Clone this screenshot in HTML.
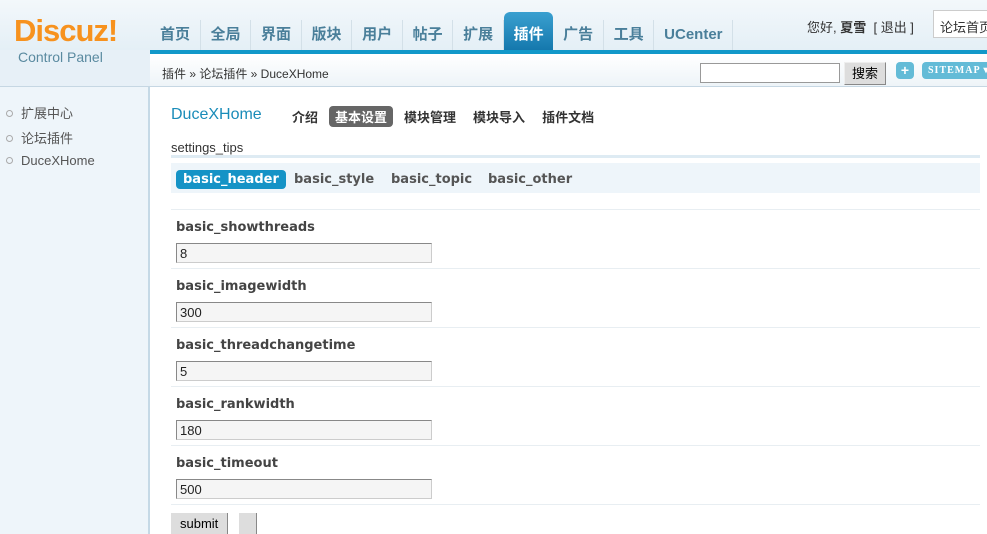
<!DOCTYPE html>
<html><head><meta charset="utf-8"><style>
*{margin:0;padding:0;box-sizing:border-box}
body{width:987px;height:534px;overflow:hidden;background:#fff;font-family:"Liberation Sans","Noto Sans CJK SC",sans-serif;font-size:12px;color:#333;position:relative}
.top{position:absolute;left:0;top:0;width:987px;height:50px;background:linear-gradient(#f3f8fb,#e4eff6)}
.side{position:absolute;left:0;top:50px;width:150px;height:484px;background:#eef5fa;border-right:2px solid #c5d9e6}
.logohead{position:absolute;left:0;top:50px;width:150px;height:37px;background:#e7f0f7;border-bottom:1px solid #c6d7e3}
.logo{position:absolute;left:14px;top:13px;font:bold 31px "Liberation Sans",sans-serif;color:#f7921e;letter-spacing:-1px}
.cp{position:absolute;left:18px;top:49px;font-size:14px;color:#5a8aa0}
.nav{position:absolute;left:150px;top:20px;height:30px;display:flex}
.nav span{font-size:15px;font-weight:bold;color:#4a7f9a;padding:5px 9.5px 0 10px;height:30px;border-right:1px solid #d3e0e8;line-height:20px}
.nav span.on{background:linear-gradient(#3aa0d0,#1578ad);color:#fff;border-radius:6px 6px 0 0;border:none;margin-top:-8px;height:38px;padding-top:13px}
.bar{position:absolute;left:150px;top:50px;width:837px;height:4px;background:#1198c9}
.crumb{position:absolute;left:150px;top:54px;width:837px;height:33px;background:linear-gradient(#fff,#eef4f8);border-bottom:1px solid #c6d7e3}
.crumb .t{position:absolute;left:12px;top:11px;font-size:12px;color:#333}
.srch{position:absolute;left:550px;top:9px;width:140px;height:20px;border:1px solid #999;background:#fff}
.sbtn{position:absolute;left:694px;top:8px;width:42px;height:23px;background:#ddd;border:1px solid #888;border-top-color:#eee;border-left-color:#eee;font-size:13px;text-align:center;line-height:21px;color:#000}
.plus{position:absolute;left:746px;top:8px;width:18px;height:17px;border-radius:4px;background:#63bbd7;color:#fff;font-weight:bold;text-align:center;line-height:17px;font-size:14px}
.smap{position:absolute;left:772px;top:8px;width:70px;height:17px;border-radius:4px;background:#63bbd7;color:#fff;font:bold 10px "Liberation Serif",serif;line-height:17px;padding-left:6px;letter-spacing:1px}
.user{position:absolute;left:807px;top:17px;font-size:13px;color:#333}
.sel{position:absolute;left:933px;top:10px;width:60px;height:28px;border:1px solid #ccc;background:#fff;font-size:13px;padding:6px 6px;white-space:nowrap}
.menu{position:absolute;left:6px;top:103px;font-size:13px;color:#555}
.menu div{height:25px}
.menu i{display:inline-block;width:7px;height:7px;border:1px solid #aaa;border-radius:50%;margin-right:8px;vertical-align:1px}
.ttl{position:absolute;left:171px;top:106px;font-size:16px;color:#1a8cb9}
.tabs{position:absolute;left:286px;top:106px;display:flex;font-size:13px;font-weight:bold;color:#333}
.tabs span{padding:1px 6px;margin-right:5px;border-radius:4px}
.tabs span.on{background:#666;color:#fff}
.tips{position:absolute;left:171px;top:140px;font-size:13px;color:#333}
.line1{position:absolute;left:171px;top:155px;width:809px;height:3px;background:#deebf3}
.sub{position:absolute;left:171px;top:163px;width:809px;height:30px;background:#eef5fa}
.sub span{position:absolute;top:9px;font:bold 13px "DejaVu Sans",sans-serif;color:#555}
.sub span.on{background:#1593c6;color:#fff;border-radius:4px;padding:2px 7px;top:7px}
.sep{position:absolute;left:171px;width:809px;height:1px;background:#e8eef2}
.lbl{position:absolute;left:176px;font:bold 13px "DejaVu Sans",sans-serif;color:#444}
.inp{position:absolute;left:176px;width:256px;height:20px;border:1px solid #888;border-right-color:#ccc;border-bottom-color:#ccc;background:#f5f5f5;font-size:13px;padding:2px 3px;color:#222}
.btn{position:absolute;top:513px;height:21px;background:#ddd;border-right:1px solid #888;font-size:13px;padding:3px 9px;color:#000}
</style></head><body>
<div class="top"></div>
<div class="side"></div>
<div class="logohead"></div>
<div class="logo">Discuz!</div>
<div class="cp">Control Panel</div>
<div class="nav"><span>首页</span><span>全局</span><span>界面</span><span>版块</span><span>用户</span><span>帖子</span><span>扩展</span><span class="on">插件</span><span>广告</span><span>工具</span><span>UCenter</span></div>
<div class="user">您好, <b>夏雪</b> &nbsp;[ 退出 ]</div>
<div class="sel">论坛首页</div>
<div class="bar"></div>
<div class="crumb"><div class="t">插件 » 论坛插件 » DuceXHome</div><div class="srch"></div><div class="sbtn">搜索</div><div class="plus">+</div><div class="smap">SITEMAP ▾</div></div>
<div class="menu"><div><i></i>扩展中心</div><div><i></i>论坛插件</div><div><i></i>DuceXHome</div></div>
<div class="ttl">DuceXHome</div>
<div class="tabs"><span>介绍</span><span class="on">基本设置</span><span>模块管理</span><span>模块导入</span><span>插件文档</span></div>
<div class="tips">settings_tips</div>
<div class="line1"></div>
<div class="sub"><span class="on" style="left:5px">basic_header</span><span style="left:123px">basic_style</span><span style="left:220px">basic_topic</span><span style="left:317px">basic_other</span></div>
<div class="sep" style="top:209px"></div>
<div class="lbl" style="top:220px">basic_showthreads</div><div class="inp" style="top:243px">8</div>
<div class="sep" style="top:268px"></div>
<div class="lbl" style="top:279px">basic_imagewidth</div><div class="inp" style="top:302px">300</div>
<div class="sep" style="top:327px"></div>
<div class="lbl" style="top:338px">basic_threadchangetime</div><div class="inp" style="top:361px">5</div>
<div class="sep" style="top:386px"></div>
<div class="lbl" style="top:397px">basic_rankwidth</div><div class="inp" style="top:420px">180</div>
<div class="sep" style="top:445px"></div>
<div class="lbl" style="top:456px">basic_timeout</div><div class="inp" style="top:479px">500</div>
<div class="sep" style="top:504px"></div>
<div class="btn" style="left:171px">submit</div>
<div class="btn" style="left:239px;width:18px;padding:0"></div>
</body></html>
